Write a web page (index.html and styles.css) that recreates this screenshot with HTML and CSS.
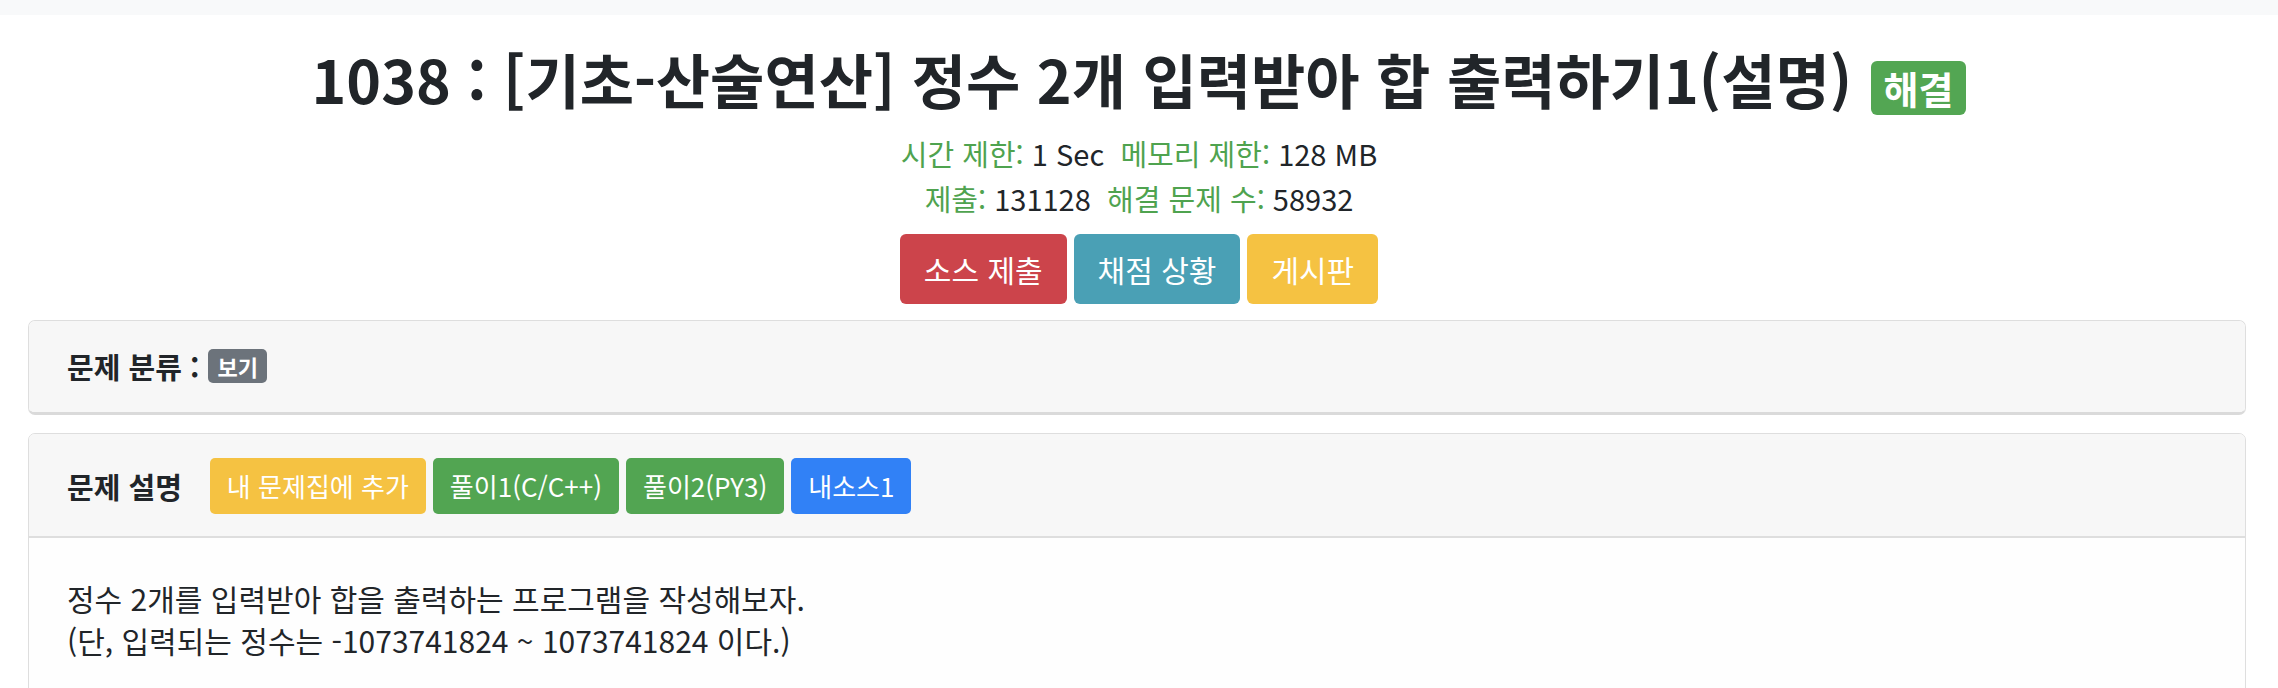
FILE: index.html
```html
<!DOCTYPE html>
<html lang="ko">
  <head>
    <title>1038 : [기초-산술연산] 정수 2개 입력받아 합 출력하기1(설명)</title>
    <link rel="stylesheet" href="styles.css">
  </head>
  <body>
    <div class="topbar"></div>

    <div class="problem-head">
      <h1 class="title">1038 : [기초-산술연산] 정수 2개 입력받아 합 출력하기1(설명) <span class="badge badge-solved">해결</span></h1>
      <div class="meta"><span class="label">시간 제한:</span> 1 Sec&nbsp; <span class="label">메모리 제한:</span> 128 MB</div>
      <div class="meta"><span class="label">제출:</span> 131128&nbsp; <span class="label">해결 문제 수:</span> 58932</div>
      <div class="actions">
        <a class="btn btn-red">소스 제출</a>
        <a class="btn btn-teal">채점 상황</a>
        <a class="btn btn-yellow">게시판</a>
      </div>
    </div>

    <div class="cards">
      <div class="card card-tags">
        <div class="card-header">
          <b>문제 분류 :</b>
          <span class="badge badge-grey">보기</span>
        </div>
      </div>

      <div class="card">
        <div class="card-header">
          <b class="header-title">문제 설명</b>
          <a class="btn btn-sm btn-yellow">내 문제집에 추가</a>
          <a class="btn btn-sm btn-green">풀이1(C/C++)</a>
          <a class="btn btn-sm btn-green">풀이2(PY3)</a>
          <a class="btn btn-sm btn-blue">내소스1</a>
        </div>
        <div class="card-body">
          <p>정수 2개를 입력받아 합을 출력하는 프로그램을 작성해보자.<br>
          (단, 입력되는 정수는 -1073741824 ~ 1073741824 이다.)</p>
        </div>
      </div>
    </div>
  </body>
</html>
```

FILE: styles.css
```css
body {
  margin: 0;
  font-family: "Noto Sans CJK KR", "Noto Sans", sans-serif;
  font-size: 30px;
  line-height: 42px;
  color: #212529;
  background-color: #ffffff;
}

.topbar {
  height: 15px;
  background-color: #f8f9fa;
}

.problem-head {
  text-align: center;
}

.title {
  margin: 29px 0 16px;
  font-size: 59px;
  line-height: 1.2;
  font-weight: 700;
}

.meta {
  font-size: 29px;
  line-height: 45px;
}

.label {
  color: #4fa34f;
}

.actions {
  display: flex;
  justify-content: center;
  gap: 7px;
  margin-top: 13px;
}

.btn {
  display: inline-block;
  padding: 13px 23px;
  border: 1px solid transparent;
  border-radius: 6px;
  color: #ffffff;
  font-size: 30px;
  line-height: 42px;
  cursor: pointer;
}

.btn-sm {
  padding: 9px 16px;
  font-size: 26px;
  line-height: 36px;
  border-radius: 5px;
}

.btn-red {
  background-color: #cc444b;
}

.btn-teal {
  background-color: #4aa0b5;
}

.btn-yellow {
  background-color: #f5c242;
}

.btn-green {
  background-color: #52a552;
}

.btn-blue {
  background-color: #3181f6;
}

.badge {
  display: inline-block;
  font-weight: 700;
  line-height: 1;
  color: #ffffff;
  border-radius: 6px;
  vertical-align: baseline;
}

.badge-solved {
  font-size: 38px;
  padding: 8px 13px;
  margin-left: 2px;
  background-color: #53a653;
}

.badge-grey {
  font-size: 22px;
  padding: 6px 9px;
  background-color: #6c737b;
  border-radius: 5px;
  margin-left: 2px;
}

.cards {
  margin: 16px 32px 0 28px;
  display: flex;
  flex-direction: column;
  gap: 18px;
}

.card {
  border: 1px solid #dedede;
  border-radius: 7px;
  background-color: #fefefe;
  overflow: hidden;
}

.card-tags {
  border-bottom: 3px solid #dadada;
}

.card-tags .card-header {
  padding: 24px 38px 25px;
  font-size: 29px;
}

.card-header {
  display: flex;
  align-items: center;
  gap: 7px;
  padding: 24px 38px 22px;
  background-color: #f7f7f7;
}

.card-header + .card-body {
  border-top: 2px solid #dedede;
}

.header-title {
  font-size: 29px;
  margin-right: 21px;
}

.card-body {
  padding: 39px 38px 60px;
}

.card-body p {
  margin: 0;
}
```
